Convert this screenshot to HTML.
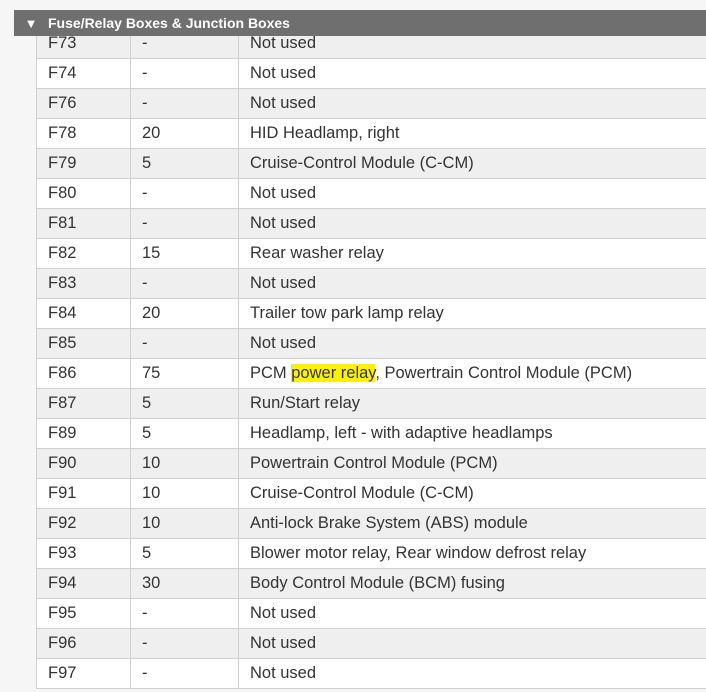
<!DOCTYPE html>
<html><head><style>
body{margin:0;width:706px;height:692px;overflow:hidden;background:#f6f6f6;font-family:"Liberation Sans",sans-serif;position:relative}
table{position:absolute;left:36px;top:28px;border-collapse:collapse;width:690px;font-size:16.5px;color:#333}
td{height:29px;border:1px solid #d0d0d0;padding:0 0 0 11px;line-height:29px;white-space:nowrap}
td.a{width:82px}td.b{width:96px}
tr:nth-child(odd){background:#efefef}
tr:nth-child(even){background:#fff}
.hl{background:#fff200}
.hdr{position:absolute;left:14px;top:10px;width:692px;height:26px;background:#6f6f6f;color:#fff;font-weight:bold;font-size:14px;line-height:26px;z-index:2}
.hdr span{display:inline-block;width:34px;text-align:center;font-size:13px}
.top{position:absolute;left:0;top:0;width:706px;height:10px;background:#f6f6f6;z-index:2}
</style></head><body>
<div class="top"></div>
<div class="hdr"><span>▼</span>Fuse/Relay Boxes &amp; Junction Boxes</div>
<table>
<tr><td class="a">F73</td><td class="b">-</td><td>Not used</td></tr>
<tr><td class="a">F74</td><td class="b">-</td><td>Not used</td></tr>
<tr><td class="a">F76</td><td class="b">-</td><td>Not used</td></tr>
<tr><td class="a">F78</td><td class="b">20</td><td>HID Headlamp, right</td></tr>
<tr><td class="a">F79</td><td class="b">5</td><td>Cruise-Control Module (C-CM)</td></tr>
<tr><td class="a">F80</td><td class="b">-</td><td>Not used</td></tr>
<tr><td class="a">F81</td><td class="b">-</td><td>Not used</td></tr>
<tr><td class="a">F82</td><td class="b">15</td><td>Rear washer relay</td></tr>
<tr><td class="a">F83</td><td class="b">-</td><td>Not used</td></tr>
<tr><td class="a">F84</td><td class="b">20</td><td>Trailer tow park lamp relay</td></tr>
<tr><td class="a">F85</td><td class="b">-</td><td>Not used</td></tr>
<tr><td class="a">F86</td><td class="b">75</td><td>PCM <span class="hl">power relay</span>, Powertrain Control Module (PCM)</td></tr>
<tr><td class="a">F87</td><td class="b">5</td><td>Run/Start relay</td></tr>
<tr><td class="a">F89</td><td class="b">5</td><td>Headlamp, left - with adaptive headlamps</td></tr>
<tr><td class="a">F90</td><td class="b">10</td><td>Powertrain Control Module (PCM)</td></tr>
<tr><td class="a">F91</td><td class="b">10</td><td>Cruise-Control Module (C-CM)</td></tr>
<tr><td class="a">F92</td><td class="b">10</td><td>Anti-lock Brake System (ABS) module</td></tr>
<tr><td class="a">F93</td><td class="b">5</td><td>Blower motor relay, Rear window defrost relay</td></tr>
<tr><td class="a">F94</td><td class="b">30</td><td>Body Control Module (BCM) fusing</td></tr>
<tr><td class="a">F95</td><td class="b">-</td><td>Not used</td></tr>
<tr><td class="a">F96</td><td class="b">-</td><td>Not used</td></tr>
<tr><td class="a">F97</td><td class="b">-</td><td>Not used</td></tr>
</table>
</body></html>
